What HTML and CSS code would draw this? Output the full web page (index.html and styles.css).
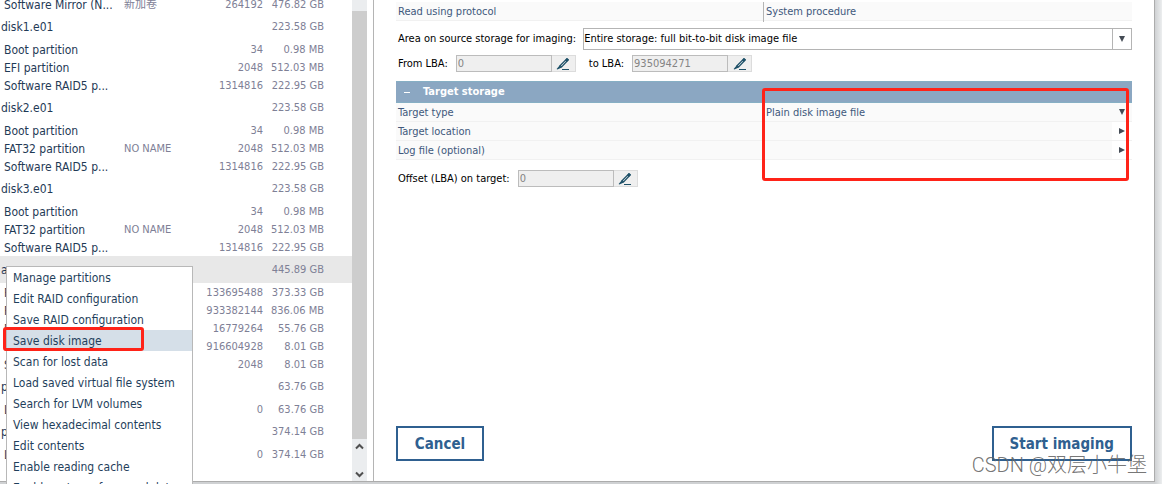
FILE: index.html
```
<!DOCTYPE html>
<html lang="en">
<head>
<meta charset="utf-8">
<title>Save disk image</title>
<link rel="stylesheet" href="styles.css">
</head>
<body>
<svg class="defs" aria-hidden="true">
  <symbol id="pen" viewBox="0 0 14 14">
    <path d="M10.8 1.8 L12.2 3 L5.6 10 L4 8.8 Z" fill="none" stroke="#1d5068" stroke-width="1.2"/>
    <path d="M3.6 8.6 L5.8 10.4 L1.4 12.6 L0.6 12 Z M8.8 3.4 L11 1 L13 2.6 L10.8 5 Z" fill="#1d5068"/>
    <path d="M6 12.5 H13" stroke="#1d5068" stroke-width="1"/>
  </symbol>
</svg>
<div class="window">
  <aside class="storages">
    <div class="list">
      <table class="disks">
        <colgroup><col class="c-name"><col class="c-label"><col class="c-start"><col class="c-size"></colgroup>
        <tbody>
          <tr class="part"><td>Software Mirror (N...</td><td>新加卷</td><td>264192</td><td>476.82 GB</td></tr>
          <tr class="disk"><td>disk1.e01</td><td></td><td></td><td>223.58 GB</td></tr>
          <tr class="part"><td>Boot partition</td><td></td><td>34</td><td>0.98 MB</td></tr>
          <tr class="part"><td>EFI partition</td><td></td><td>2048</td><td>512.03 MB</td></tr>
          <tr class="part"><td>Software RAID5 p...</td><td></td><td>1314816</td><td>222.95 GB</td></tr>
          <tr class="disk"><td>disk2.e01</td><td></td><td></td><td>223.58 GB</td></tr>
          <tr class="part"><td>Boot partition</td><td></td><td>34</td><td>0.98 MB</td></tr>
          <tr class="part"><td>FAT32 partition</td><td>NO NAME</td><td>2048</td><td>512.03 MB</td></tr>
          <tr class="part"><td>Software RAID5 p...</td><td></td><td>1314816</td><td>222.95 GB</td></tr>
          <tr class="disk"><td>disk3.e01</td><td></td><td></td><td>223.58 GB</td></tr>
          <tr class="part"><td>Boot partition</td><td></td><td>34</td><td>0.98 MB</td></tr>
          <tr class="part"><td>FAT32 partition</td><td>NO NAME</td><td>2048</td><td>512.03 MB</td></tr>
          <tr class="part"><td>Software RAID5 p...</td><td></td><td>1314816</td><td>222.95 GB</td></tr>
          <tr class="disk selected"><td>a</td><td></td><td></td><td>445.89 GB</td></tr>
          <tr class="part"><td>F</td><td></td><td>133695488</td><td>373.33 GB</td></tr>
          <tr class="part"><td>F</td><td></td><td>933382144</td><td>836.06 MB</td></tr>
          <tr class="part"><td>F</td><td></td><td>16779264</td><td>55.76 GB</td></tr>
          <tr class="part"><td>F</td><td></td><td>916604928</td><td>8.01 GB</td></tr>
          <tr class="part"><td>S</td><td></td><td>2048</td><td>8.01 GB</td></tr>
          <tr class="disk"><td>p</td><td></td><td></td><td>63.76 GB</td></tr>
          <tr class="part"><td>L</td><td></td><td>0</td><td>63.76 GB</td></tr>
          <tr class="disk"><td>p</td><td></td><td></td><td>374.14 GB</td></tr>
          <tr class="part"><td>L</td><td></td><td>0</td><td>374.14 GB</td></tr>
        </tbody>
      </table>
    </div>
    <div class="scroll">
      <div class="thumb"></div>
      <button class="arrow" aria-label="Scroll up"><svg width="9" height="7" viewBox="0 0 9 7"><path d="M1 5.5 L4.5 2 L8 5.5" fill="none" stroke="#505050" stroke-width="2"/></svg></button>
      <button class="arrow" aria-label="Scroll down"><svg width="9" height="7" viewBox="0 0 9 7"><path d="M1 1.5 L4.5 5 L8 1.5" fill="none" stroke="#505050" stroke-width="2"/></svg></button>
    </div>
  </aside>

  <main class="imaging">
    <div class="prop"><span>Read using protocol</span><span class="value ruled">System procedure</span></div>
    <div class="field area">
      <label for="area">Area on source storage for imaging:</label>
      <div class="combo">
        <select id="area"><option>Entire storage: full bit-to-bit disk image file</option></select>
        <span class="drop"><svg width="6" height="6" viewBox="0 0 6 6"><path d="M0 0 H6 L3 6 Z" fill="#444b55"/></svg></span>
      </div>
    </div>
    <div class="field">
      <label for="from">From LBA:</label>
      <div class="lba"><input id="from" value="0" disabled><button aria-label="Edit start"><svg width="14" height="14"><use href="#pen"/></svg></button></div>
      <label class="to" for="to">to LBA:</label>
      <div class="lba"><input id="to" value="935094271" disabled><button aria-label="Edit end"><svg width="14" height="14"><use href="#pen"/></svg></button></div>
    </div>
    <h2 class="section"><span class="minus"></span>Target storage</h2>
    <div class="prop"><span>Target type</span><span class="value">Plain disk image file</span><button class="more shaded" aria-label="Choose type"><svg width="6" height="6" viewBox="0 0 6 6"><path d="M0 0 H6 L3 6 Z" fill="#444b55"/></svg></button></div>
    <div class="prop"><span>Target location</span><span class="value"></span><button class="more" aria-label="Choose location"><svg width="6" height="6" viewBox="0 0 6 6"><path d="M0 0 L6 3 L0 6 Z" fill="#444b55"/></svg></button></div>
    <div class="prop"><span>Log file (optional)</span><span class="value"></span><button class="more" aria-label="Choose log file"><svg width="6" height="6" viewBox="0 0 6 6"><path d="M0 0 L6 3 L0 6 Z" fill="#444b55"/></svg></button></div>
    <div class="field offset">
      <label for="offset">Offset (LBA) on target:</label>
      <div class="lba"><input id="offset" value="0" disabled><button aria-label="Edit offset"><svg width="14" height="14"><use href="#pen"/></svg></button></div>
    </div>
    <footer class="actions">
      <button class="action">Cancel</button>
      <button class="action">Start imaging</button>
    </footer>
  </main>
</div>

<menu class="menu">
  <li><button>Manage partitions</button></li>
  <li><button>Edit RAID configuration</button></li>
  <li><button>Save RAID configuration</button></li>
  <li><button class="active">Save disk image</button></li>
  <li><button>Scan for lost data</button></li>
  <li><button>Load saved virtual file system</button></li>
  <li><button>Search for LVM volumes</button></li>
  <li><button>View hexadecimal contents</button></li>
  <li><button>Edit contents</button></li>
  <li><button>Enable reading cache</button></li>
  <li><button>Enable nature of sourced data</button></li>
</menu>
<div class="mark mark-menu"></div>
<div class="mark mark-target"></div>
<div class="watermark">CSDN @双层小牛堡</div>
</body>
</html>
```
FILE: styles.css
```
* { box-sizing: border-box; }
body {
  margin: 0;
  height: 100vh;
  position: relative;
  overflow: hidden;
  display: flex;
  padding: 0 7px 2px 0;
  background: linear-gradient(to left, #eceeef, #cfd1d3 7px);
  font: 11px/18px Tahoma, "DejaVu Sans Condensed", "Noto Sans CJK SC", sans-serif;
  color: #000;
}
button, input, select { font: inherit; color: inherit; margin: 0; padding: 0; border: 0; background: none; border-radius: 0; }
.defs { position: absolute; width: 0; height: 0; }
.window { flex: 1; display: flex; min-width: 0; background: #fff; border: solid #acacac; border-width: 0 1px 1px 0; }

.storages { width: 374px; flex: none; display: flex; padding-right: 6px; border-right: 1px solid #b4b4b4; overflow: hidden; }
.list { flex: 1; overflow: hidden; }
.disks { width: 100%; margin-top: -5px; border-collapse: collapse; table-layout: fixed; color: #7e8096; }
.c-name { width: 120px; }
.c-label { width: 60px; }
.c-start { width: 83px; }
.disks td { padding: 0; white-space: nowrap; line-height: 16px; }
.disks td:nth-child(1) { font-size: 12px; color: #1f3a56; padding-left: 4px; }
.disks td:nth-child(2) { padding-left: 4px; }
.disks td:nth-child(3) { text-align: right; }
.disks td:nth-child(4) { text-align: right; padding-right: 28px; }
.disks .part td { height: 18px; padding-top: 2px; }
.disks .disk td { height: 27px; padding-top: 1px; }
.disks .disk td:first-child { padding-left: 1px; }
.selected { background: #e8e8e8; }
.scroll { width: 15px; flex: none; display: flex; flex-direction: column; background: #ebedef; padding-top: 11px; }
.thumb { flex: 1; background: #cdcdcd; }
.arrow { height: 14px; margin-bottom: 14px; display: grid; place-items: center; }
.arrow:last-child { margin-bottom: 0; }

.imaging { flex: 1; min-width: 0; display: flex; flex-direction: column; padding: 2px 22px 20px; }
.prop { display: grid; grid-template-columns: 1fr 1fr; height: 19px; flex: none; position: relative; background: #fafafa; border-bottom: 1px solid #f1f1f1; color: #40587c; padding-left: 2px; line-height: 20px; }
.value { margin-left: -2px; padding-left: 3px; }
.ruled { border-left: 1px solid #b4b4b4; padding-left: 2px; }
.more { position: absolute; right: 0; top: 0; bottom: 0; width: 20px; display: flex; align-items: center; padding-left: 7px; background: #fff; }
.shaded { background: none; }
.field { display: flex; align-items: center; height: 17px; flex: none; padding-left: 2px; }
.area { height: 22px; margin: 7px 0 5px; gap: 7px; }
.combo { flex: 1; height: 22px; display: flex; border: 1px solid #b4b4b4; position: relative; }
.combo select { flex: 1; appearance: none; }
.drop { position: absolute; right: 0; top: 0; bottom: 0; width: 19px; border-left: 1px solid #b4b4b4; display: grid; place-items: center; pointer-events: none; }
.lba { display: flex; height: 17px; margin-left: 8px; }
.lba input { width: 96px; padding-left: 1px; background: #efefef; border: 1px solid #bcbcbc; color: #848484; }
.lba button { width: 24px; background: #efefef; border: 1px solid #dcdcdc; border-left: 0; display: grid; place-items: center; }
.to { margin-left: 13px; }
.section { display: flex; align-items: center; height: 22px; flex: none; margin: 9px 0 0; padding-left: 8px; gap: 13px; background: #8ba7c2; border: solid #86afc4; border-width: 1px 0; color: #fff; font-size: 11px; font-weight: bold; }
.minus { width: 6px; height: 1px; background: #fff; }
.offset { margin-top: 10px; }
.actions { display: flex; justify-content: space-between; margin-top: auto; }
.action { height: 35px; min-width: 88px; padding: 0 16px; border: 2px solid #2f6090; background: #fff; color: #2f6090; font-size: 15px; font-weight: bold; }

.menu { position: absolute; left: 6px; top: 266px; width: 187px; margin: 0; padding: 0; list-style: none; background: #fff; border: 1px solid #b8b8b8; font-size: 12px; color: #1f3f5c; }
.menu button { display: block; width: 100%; height: 21px; padding-left: 6px; text-align: left; white-space: nowrap; }
.menu .active { background: #d5dfe8; }
.mark { position: absolute; border: 3px solid #ff2318; border-radius: 3px; pointer-events: none; }
.mark-menu { left: 3px; top: 327px; width: 141px; height: 24px; }
.mark-target { left: 762px; top: 88px; width: 367px; height: 93px; }
.watermark { position: absolute; right: 15px; bottom: 6px; font: 300 20px/26px Roboto, "Noto Sans CJK SC", sans-serif; color: rgba(100, 100, 100, 0.9); }
```
